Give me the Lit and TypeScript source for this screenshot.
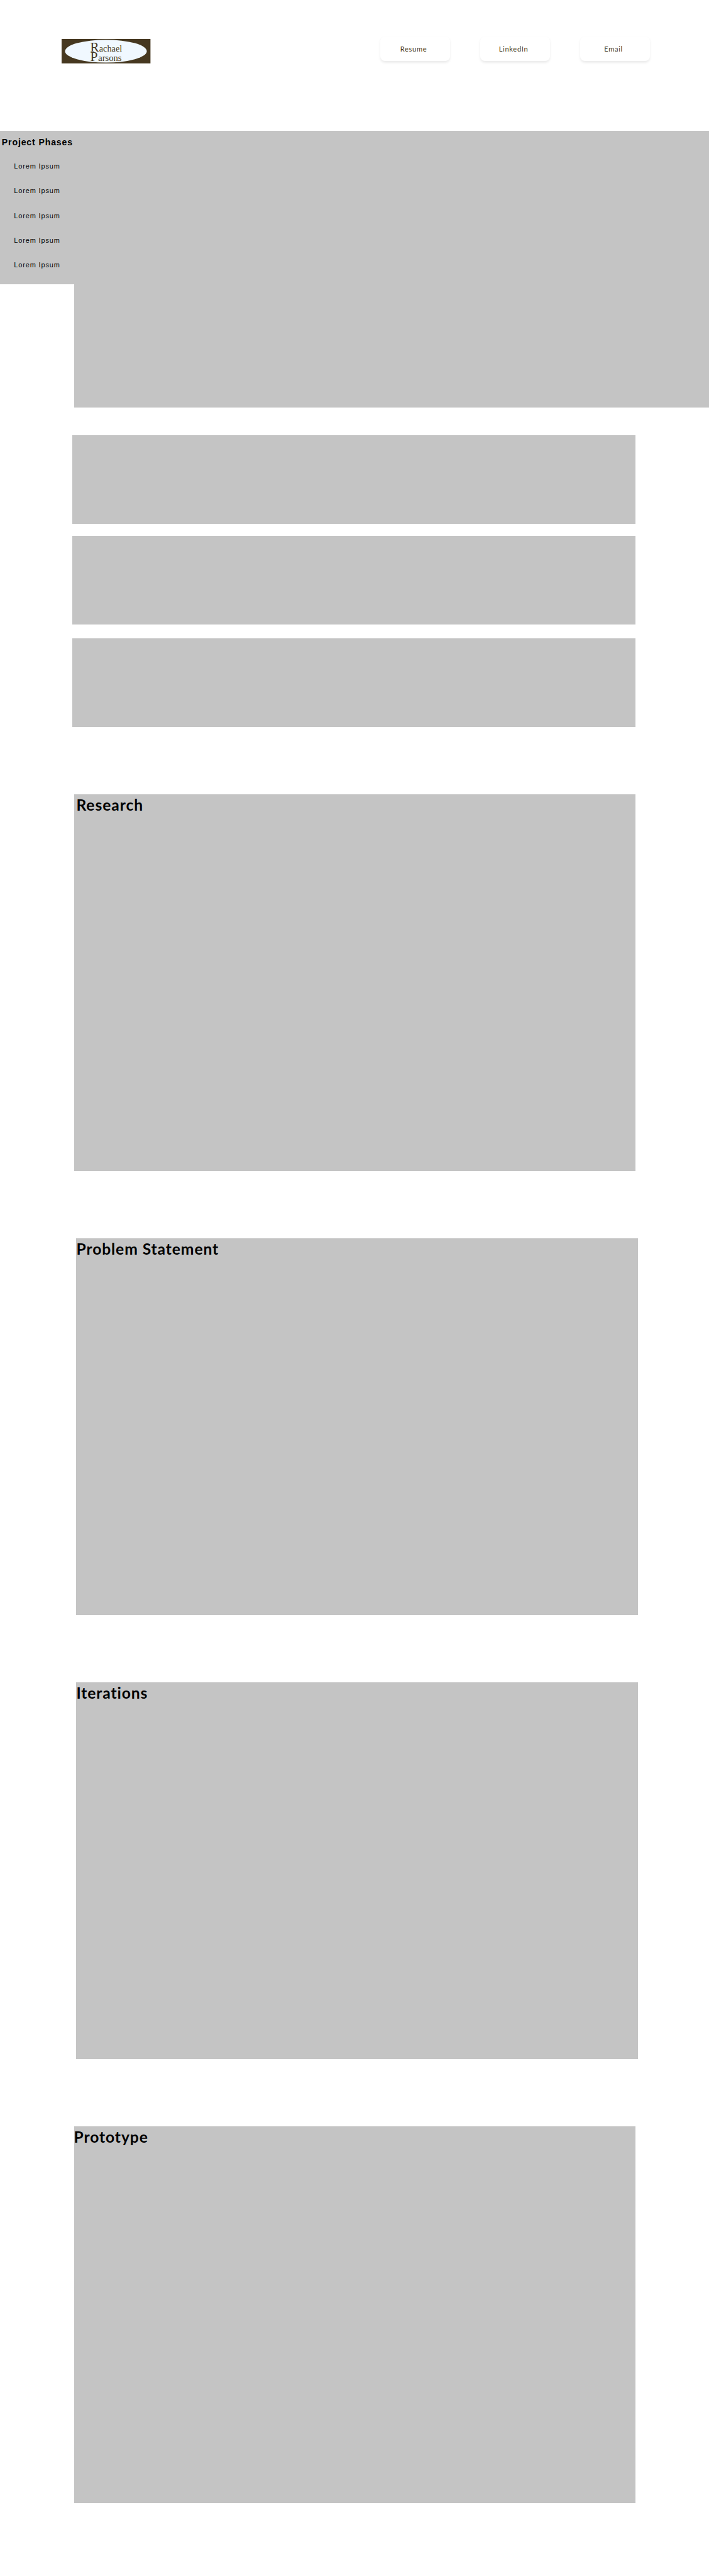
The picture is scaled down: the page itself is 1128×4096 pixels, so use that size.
import { LitElement, html, css } from "lit";
import { customElement, property } from "lit/decorators.js";
import { classMap } from "lit/directives/class-map.js";

@customElement("brand-logo")
class BrandLogo extends LitElement {
  static styles = css`
    :host { display: block; width: calc(180.5 * var(--u)); height: calc(49.5 * var(--u)); }
    svg { display: block; width: 100%; height: 100%; overflow: visible; }
    .plate, .word { fill: #463820; }
    .oval { fill: #f0f8ff; }
    .word { font-family: "Liberation Serif", serif; font-size: 18px; }
    .initial { font-size: 27.5px; }
  `;
  render() {
    return html`<svg viewBox="0 0 180.5 49.5" role="img" aria-label="Rachael Parsons">
      <rect class="plate" width="180.5" height="49.5"></rect>
      <ellipse class="oval" cx="90" cy="24.8" rx="83" ry="23.2"></ellipse>
      <text class="word initial" x="58" y="25" textLength="18" lengthAdjust="spacingAndGlyphs">R</text>
      <text class="word" x="76.3" y="25" textLength="46.5" lengthAdjust="spacingAndGlyphs">achael</text>
      <text class="word initial" x="58" y="45">P</text>
      <text class="word" x="74.3" y="45" textLength="47.5" lengthAdjust="spacingAndGlyphs">arsons</text>
    </svg>`;
  }
}

@customElement("phase-section")
class PhaseSection extends LitElement {
  @property() heading = "";
  static styles = css`
    :host { display: block; box-sizing: border-box; width: calc(1140 * var(--u)); height: calc(765 * var(--u)); background: #c4c4c4; }
    .heading {
      margin: 0; padding-left: var(--inset, 0px);
      font: 700 calc(31.5 * var(--u)) / calc(43 * var(--u)) Lato, sans-serif;
      letter-spacing: calc(1.15 * var(--u)); color: #000; white-space: nowrap;
    }
  `;
  render() {
    return html`<h2 class="heading">${this.heading}</h2>`;
  }
}

@customElement("app-root")
class AppRoot extends LitElement {
  static styles = css`
    :host { --u: 0.78345px; display: block; width: 1128px; height: 4096px; background: #fff; overflow: hidden; }
    .header { display: flex; justify-content: space-between; align-items: flex-start; box-sizing: border-box;
      height: calc(265 * var(--u)); padding: calc(74 * var(--u)) calc(120 * var(--u)) 0 calc(125 * var(--u)); }
    .logo { margin-top: calc(5 * var(--u)); }
    .nav { display: flex; gap: calc(61 * var(--u)); }
    .link { display: flex; align-items: center; justify-content: center; box-sizing: border-box;
      width: calc(142 * var(--u)); height: calc(50 * var(--u)); padding-right: calc(6 * var(--u));
      border-radius: calc(10 * var(--u)); background: #fff; text-decoration: none;
      box-shadow: 0 calc(3 * var(--u)) calc(5 * var(--u)) rgba(0, 0, 0, 0.08);
      color: #463820; font: 400 calc(14.2 * var(--u)) Lato, sans-serif; letter-spacing: calc(0.9 * var(--u)); }
    .hero { display: flex; align-items: flex-start; height: calc(562 * var(--u)); }
    .sidebar { box-sizing: border-box; width: calc(150 * var(--u)); height: calc(312 * var(--u)); background: #c4c4c4;
      font-family: "Liberation Sans", sans-serif; color: #000; white-space: nowrap; }
    .title { margin: 0; padding-left: calc(3.6 * var(--u)); font-size: calc(18 * var(--u)); line-height: calc(48 * var(--u)); letter-spacing: calc(1.1 * var(--u)); }
    .phases { list-style: none; margin: 0; padding: 0 0 0 calc(28.4 * var(--u)); }
    .phase { font-size: calc(14 * var(--u)); line-height: calc(50 * var(--u)); letter-spacing: calc(1.12 * var(--u)); }
    .banner { flex: 1; height: 100%; background: #c4c4c4; }
    .strips { padding: calc(56 * var(--u)) 0 0 calc(147 * var(--u)); }
    .strip { width: calc(1143 * var(--u)); height: calc(180 * var(--u)); margin-bottom: calc(24 * var(--u)); background: #c4c4c4; }
    .strip.spaced { margin-bottom: calc(29 * var(--u)); }
    .strip.last { margin-bottom: 0; }
    .sections { display: flex; flex-direction: column; gap: calc(136 * var(--u)); padding: calc(136 * var(--u)) 0 0 calc(150 * var(--u)); }
    .shifted { margin-left: calc(5 * var(--u)); }
    .inset { --inset: calc(5 * var(--u)); }
  `;
  render() {
    const sections = [
      { name: "Research", inset: true, shifted: false },
      { name: "Problem Statement", inset: false, shifted: true },
      { name: "Iterations", inset: false, shifted: true },
      { name: "Prototype", inset: false, shifted: false },
    ];
    return html`
      <header class="header">
        <brand-logo class="logo"></brand-logo>
        <nav class="nav">${["Resume", "LinkedIn", "Email"].map((t) => html`<a class="link" href="#">${t}</a>`)}</nav>
      </header>
      <div class="hero">
        <aside class="sidebar">
          <h3 class="title">Project Phases</h3>
          <ul class="phases">${Array.from({ length: 5 }, () => html`<li class="phase">Lorem Ipsum</li>`)}</ul>
        </aside>
        <div class="banner"></div>
      </div>
      <div class="strips">
        <div class="strip"></div>
        <div class="strip spaced"></div>
        <div class="strip last"></div>
      </div>
      <main class="sections">
        ${sections.map((s) => html`<phase-section class=${classMap({ inset: s.inset, shifted: s.shifted })} .heading=${s.name}></phase-section>`)}
      </main>
    `;
  }
}
